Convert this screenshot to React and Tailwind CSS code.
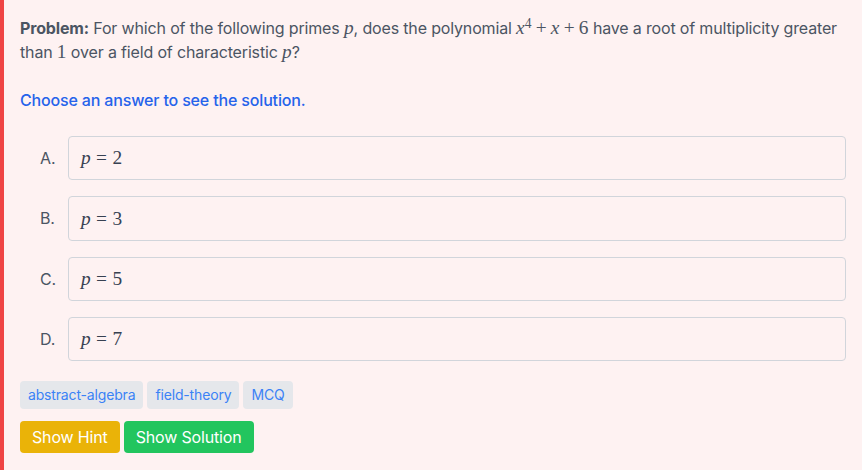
const sans = { fontFamily: 'Inter, "Liberation Sans", sans-serif' };

const M = ({ children }) => (
  <span
    className="text-[1.21em] leading-none tracking-normal"
    style={{ fontFamily: '"Liberation Serif", "DejaVu Serif", serif' }}
  >
    {children}
  </span>
);

const V = ({ children }) => <i>{children}</i>;
const Op = ({ children }) => <span className="mx-[0.22em]">{children}</span>;
const Rel = ({ children }) => <span className="mx-[0.28em]">{children}</span>;

const options = [
  { label: 'A.', value: '2' },
  { label: 'B.', value: '3' },
  { label: 'C.', value: '5' },
  { label: 'D.', value: '7' },
];

const tags = ['abstract-algebra', 'field-theory', 'MCQ'];

export default function App() {
  return (
    <div
      className="min-h-screen bg-[#fef2f2] border-l-4 border-[#ef4444] p-4 text-[#4b5563] tracking-[-0.01em]"
      style={sans}
    >
      <p className="text-base leading-6">
        <span className="font-bold">Problem:</span> For which of the following primes <M><V>p</V></M>, does the
        polynomial{' '}
        <M>
          <V>x</V>
          <span className="relative -top-[0.45em] text-[0.7em]">4</span>
          <Op>+</Op>
          <V>x</V>
          <Op>+</Op>6
        </M>{' '}
        have a root of multiplicity greater than <M>1</M> over a field of characteristic <M><V>p</V></M>?
      </p>

      <p className="mt-6 text-[#2563eb] font-medium leading-6">Choose an answer to see the solution.</p>

      <div className="mt-6 pl-5 flex flex-col gap-4">
        {options.map((opt) => (
          <div key={opt.label} className="flex items-center">
            <span className="w-7 shrink-0">{opt.label}</span>
            <div className="flex-1 h-[44.33px] flex items-center border border-[#d1d5db] rounded px-3 text-[#374151]">
              <M>
                <V>p</V>
                <Rel>=</Rel>
                {opt.value}
              </M>
            </div>
          </div>
        ))}
      </div>

      <div className="mt-5 flex gap-1">
        {tags.map((t) => (
          <span key={t} className="bg-[#e5e7eb] text-[#3b82f6] text-sm leading-5 px-2 py-1 rounded">
            {t}
          </span>
        ))}
      </div>

      <div className="mt-3 flex gap-1">
        <button className="bg-[#eab308] text-white px-3 py-1 rounded leading-6">Show Hint</button>
        <button className="bg-[#22c55e] text-white px-3 py-1 rounded leading-6">Show Solution</button>
      </div>
    </div>
  );
}
